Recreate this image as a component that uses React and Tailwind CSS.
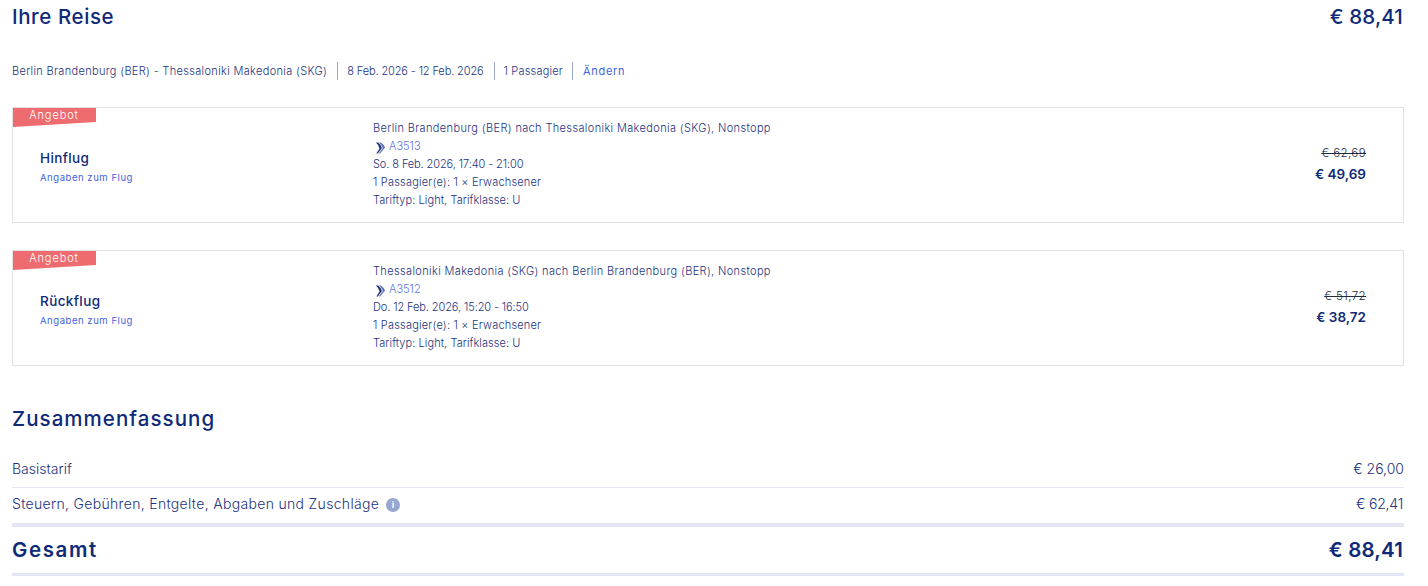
const navy = 'text-[#0f2a78]';

function PlaneMark() {
  return (
    <svg viewBox="0 0 12 14" className="w-[11px] h-[14px] ml-[2px] mr-[3px] mt-[4px] shrink-0">
      <path d="M1 1 L3.5 1 Q7 4 7.5 7 L3 13 L1.5 13 L5 7.5 Q4.5 4 1 1 Z" fill="#1d2f6f" />
      <path d="M4.5 1 L6.5 1 Q10.5 4 11 6.5 L5.5 13 L4 13 L8.5 7 Q7.5 4 4.5 1 Z" fill="#5f74b8" />
    </svg>
  );
}

function FlightCard({ title, route, flight, date, oldPrice, price }) {
  return (
    <div className="relative flex h-[116px] border border-[#e3e3e3] bg-white">
      {/* Angebot ribbon */}
      <div className="absolute left-0 top-0 w-[83px] h-[19px] bg-[#ee6b70] text-white text-[11px] font-light tracking-[0.9px] leading-[14px] text-center pr-[1px] [clip-path:polygon(0_0,100%_0,100%_14px,0_100%)]">
        Angebot
      </div>
      <div className="w-[360px] pl-[27px] pt-[40px] shrink-0">
        <div className={`text-[13.5px] leading-[20px] font-medium tracking-[0.4px] ${navy}`}>{title}</div>
        <div className="text-[9.5px] leading-[14px] mt-[3px] tracking-[0.55px] text-[#3f62e0]">Angaben zum Flug</div>
      </div>
      <div className="flex-1 pt-[11px] text-[11px] font-light leading-[18px] text-[#1c3380]">
        <div className="tracking-[0.36px]">{route}</div>
        <div className="flex text-[#5b76e6]">
          <PlaneMark />
          {flight}
        </div>
        <div className="tracking-[-0.1px]">{date}</div>
        <div className="tracking-[0.2px]">1 Passagier(e): 1 × Erwachsener</div>
        <div className="tracking-[0.07px]">Tariftyp: Light, Tarifklasse: U</div>
      </div>
      <div className="w-[160px] pr-[37px] pt-[36px] text-right">
        <div className="text-[11.5px] font-light tracking-[0.4px] leading-[18px] line-through text-[#222a3d]">{oldPrice}</div>
        <div className={`text-[13.5px] leading-[20px] mt-[2px] font-semibold ${navy}`}>{price}</div>
      </div>
    </div>
  );
}

export default function App() {
  return (
    <div className="w-[1428px] h-[586px] overflow-hidden bg-white pl-[12px] pr-[24px] font-['Inter',sans-serif]">
      <div className={`flex justify-between h-[34px] items-center text-[20.5px] font-medium ${navy}`}>
        <span className="tracking-[0.6px]">Ihre Reise</span>
        <span className="pr-[1px] tracking-[0.15px]">€ 88,41</span>
      </div>

      <div className="flex items-center h-[18px] mt-[28px] text-[11px] font-light text-[#1c3380]">
        <span className="pr-[10px] border-r border-[#9aa6cf] leading-[18px] tracking-[0.33px]">Berlin Brandenburg (BER) - Thessaloniki Makedonia (SKG)</span>
        <span className="pl-[9px] pr-[10px] border-r border-[#9aa6cf] leading-[18px] tracking-[-0.12px]">8 Feb. 2026 - 12 Feb. 2026</span>
        <span className="pl-[9px] pr-[9px] border-r border-[#9aa6cf] leading-[18px] tracking-[0.2px]">1 Passagier</span>
        <span className="pl-[10px] leading-[18px] font-normal tracking-[0.7px] text-[#3f62e0]">Ändern</span>
      </div>

      <div className="mt-[27px] flex flex-col gap-[27px]">
        <FlightCard
          title="Hinflug"
          route="Berlin Brandenburg (BER) nach Thessaloniki Makedonia (SKG), Nonstopp"
          flight="A3513"
          date="So. 8 Feb. 2026, 17:40 - 21:00"
          oldPrice="€ 62,69"
          price="€ 49,69"
        />
        <FlightCard
          title="Rückflug"
          route="Thessaloniki Makedonia (SKG) nach Berlin Brandenburg (BER), Nonstopp"
          flight="A3512"
          date="Do. 12 Feb. 2026, 15:20 - 16:50"
          oldPrice="€ 51,72"
          price="€ 38,72"
        />
      </div>

      <div className={`mt-[40px] h-[26px] leading-[26px] text-[20.5px] font-medium tracking-[1.05px] ${navy}`}>Zusammenfassung</div>

      <div className="mt-[19px] flex justify-between items-center h-[37px] pb-[2px] border-b border-[#e3e5f1] text-[14px] font-light text-[#1c3380]">
        <span>Basistarif</span>
        <span>€ 26,00</span>
      </div>
      <div className="flex justify-between items-center h-[35px] pb-[5px] text-[14px] font-light text-[#1c3380]">
        <span className="flex items-center tracking-[0.32px]">
          Steuern, Gebühren, Entgelte, Abgaben und Zuschläge
          <span className="ml-[7px] mt-[3px] w-[14px] h-[14px] rounded-full bg-[#98a6d2] text-white text-[9px] leading-[14px] text-center font-bold">i</span>
        </span>
        <span className="pr-[1px] tracking-[-0.2px]">€ 62,41</span>
      </div>
      <div className="h-[4px] bg-[#e3e5f4]" />
      <div className={`flex justify-between items-center h-[46px] text-[20.5px] font-semibold ${navy}`}>
        <span className="tracking-[1.6px]">Gesamt</span>
        <span className="pr-[1px] tracking-[0.15px]">€ 88,41</span>
      </div>
      <div className="h-[3px] bg-[#e3e5f4]" />
    </div>
  );
}
